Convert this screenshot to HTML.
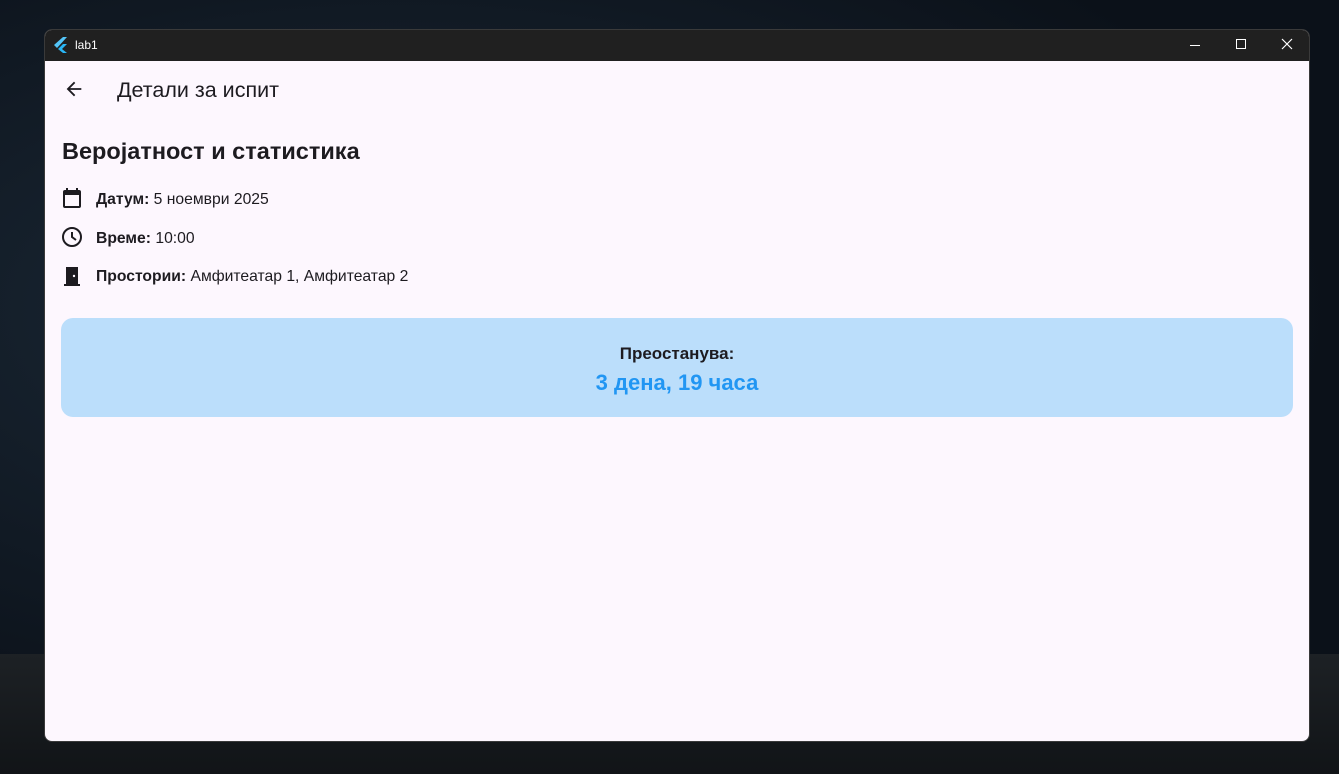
<!DOCTYPE html>
<html><head><meta charset="utf-8"><style>
*{margin:0;padding:0;box-sizing:border-box}
body{width:1339px;height:774px;overflow:hidden;position:relative;background:radial-gradient(ellipse at 30% 40%,#1c2a38,#0b1119 70%);font-family:"Liberation Sans","DejaVu Sans",sans-serif}
.mtn{position:absolute;left:0;bottom:0;width:1339px;height:120px;background:linear-gradient(#1d2125,#111417)}
.win{position:absolute;left:44px;top:29px;width:1266px;height:713px;border-radius:8px;overflow:hidden;background:#fdf7fe;border:1px solid #3a3a3a}
.tb{height:31px;background:#202020;color:#fff;font-size:12px;position:relative}
.tb .t{position:absolute;left:30px;top:8px}
.c{position:absolute;color:#1d1b20}
</style></head><body>
<div class="mtn"></div>
<div class="win">
<div class="tb">
<svg style="position:absolute;left:9px;top:7px" width="14" height="16" viewBox="0 0 14 16"><path d="M9 0L0 8l3 3L13 0z" fill="#54c5f8"/><path d="M9 7L4 12l5 4h4l-5-4 5-5z" fill="#29b6f6"/></svg>
<span class="t">lab1</span>
<div style="position:absolute;left:1145px;top:15px;width:10px;height:1px;background:#fff"></div>
<div style="position:absolute;left:1191px;top:9px;width:10px;height:10px;border:1px solid #fff"></div>
<svg style="position:absolute;left:1236px;top:8px" width="12" height="12"><path d="M1 1L11 11M11 1L1 11" stroke="#fff" stroke-width="1.2"/></svg>
</div>
<svg class="c" style="left:18px;top:48px" width="22" height="22" viewBox="0 0 24 24"><path d="M20 11H7.8l5.6-5.6L12 4l-8 8 8 8 1.4-1.4L7.8 13H20z" fill="#1d1b20"/></svg>
<div class="c" style="left:72px;top:48px;font-size:21.5px">Детали за испит</div>
<div class="c" style="left:17px;top:108px;font-size:23.5px;font-weight:bold">Веројатност и статистика</div>
<svg class="c" style="left:15px;top:156px" width="24" height="24" viewBox="0 0 24 24"><path d="M19 4h-1V2h-2v2H8V2H6v2H5a2 2 0 0 0-2 2v14a2 2 0 0 0 2 2h14a2 2 0 0 0 2-2V6a2 2 0 0 0-2-2zm0 16H5V9h14z" fill="#1d1b20"/></svg>
<div class="c" style="left:51px;top:161px;font-size:15.7px"><b>Датум:</b> 5 ноември 2025</div>
<svg class="c" style="left:15px;top:195px" width="24" height="24" viewBox="0 0 24 24"><circle cx="12" cy="12" r="9" fill="none" stroke="#1d1b20" stroke-width="2"/><path d="M12 7v5l4 3" fill="none" stroke="#1d1b20" stroke-width="2"/></svg>
<div class="c" style="left:51px;top:200px;font-size:15.7px"><b>Време:</b> 10:00</div>
<svg class="c" style="left:15px;top:234px" width="24" height="24" viewBox="0 0 24 24"><path d="M6 3h12v17h2v2H4v-2h2z" fill="#1d1b20"/><circle cx="14" cy="12" r="1.2" fill="#fdf7fe"/></svg>
<div class="c" style="left:51px;top:238px;font-size:15.7px"><b>Простории:</b> Амфитеатар 1, Амфитеатар 2</div>
<div style="position:absolute;left:16px;top:288px;width:1232px;height:99px;background:#bbdefb;border-radius:12px;text-align:center">
<div style="margin-top:26px;font-size:17px;font-weight:bold;color:#1d1b20">Преостанува:</div>
<div style="margin-top:6px;font-size:22px;font-weight:bold;color:#2196f3">3 дена, 19 часа</div>
</div>
</div>
</body></html>
